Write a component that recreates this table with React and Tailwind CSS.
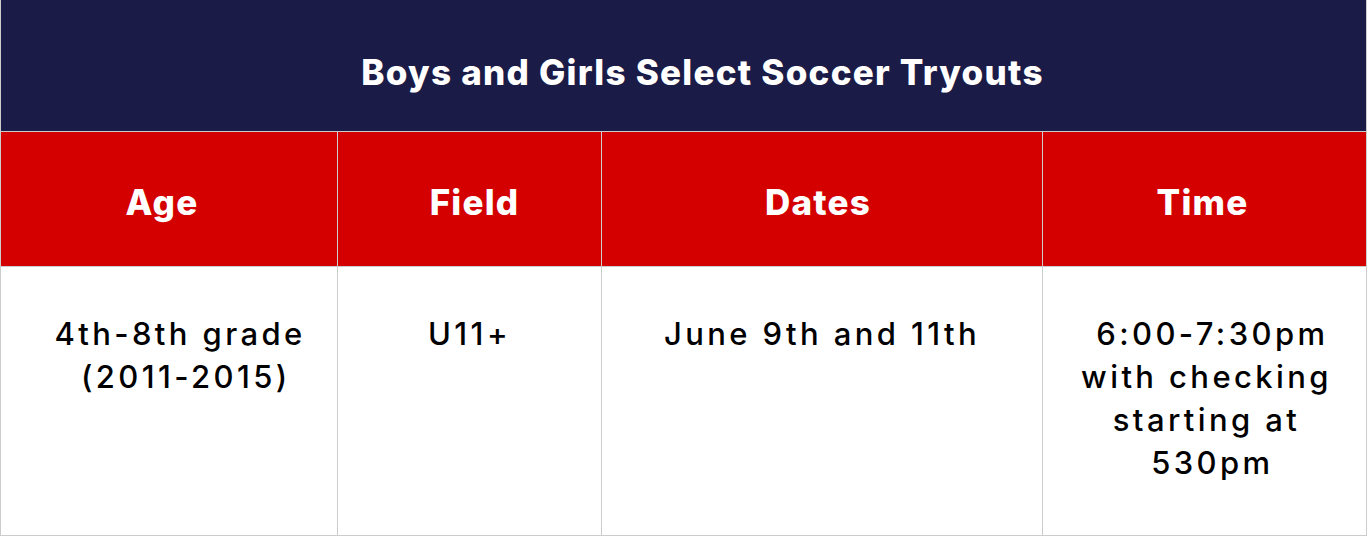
export default function App() {
  const font = { fontFamily: '"Inter", "Liberation Sans", sans-serif' };
  const body =
    "h-[268px] pt-[45px] text-center text-black font-medium text-[31px] leading-[43px] tracking-[3.4px]";
  const heads = [
    ["Age", "pr-[14px]"],
    ["Field", "pl-[10px]"],
    ["Dates", "pr-[8px]"],
    ["Time", "pr-[4px]"],
  ];
  return (
    <div className="w-[1367px] h-[537px] bg-white" style={font}>
      <div className="w-full border-l border-r border-b border-[#cccccc] box-border">
        <div className="h-[132px] pt-[14px] pl-[38px] bg-[#1a1b46] flex items-center justify-center border-b border-[#cccccc]">
          <span className="text-white font-extrabold text-[35px] tracking-[1.25px]">
            Boys and Girls Select Soccer Tryouts
          </span>
        </div>
        <div className="grid grid-cols-[336px_264px_441px_1fr]">
          {heads.map(([h, pad], i) => (
            <div
              key={h}
              className={`h-[135px] pt-[6px] ${pad} bg-[#d40000] flex items-center justify-center border-b border-[#cccccc] ${i > 0 ? "border-l" : ""}`}
            >
              <span className="text-white font-extrabold text-[35px] tracking-[1.2px]">{h}</span>
            </div>
          ))}
          <div className={`${body} pl-[22px]`}>
            4th-8th grade<br />&nbsp;(2011-2015)
          </div>
          <div className={`${body} border-l border-[#cccccc]`}>U11+</div>
          <div className={`${body} border-l border-[#cccccc]`}>June 9th and 11th</div>
          <div className={`${body} pl-[4px] border-l border-[#cccccc]`}>
            &nbsp;6:00-7:30pm<br />with checking<br />starting at<br />&nbsp;530pm
          </div>
        </div>
      </div>
    </div>
  );
}
